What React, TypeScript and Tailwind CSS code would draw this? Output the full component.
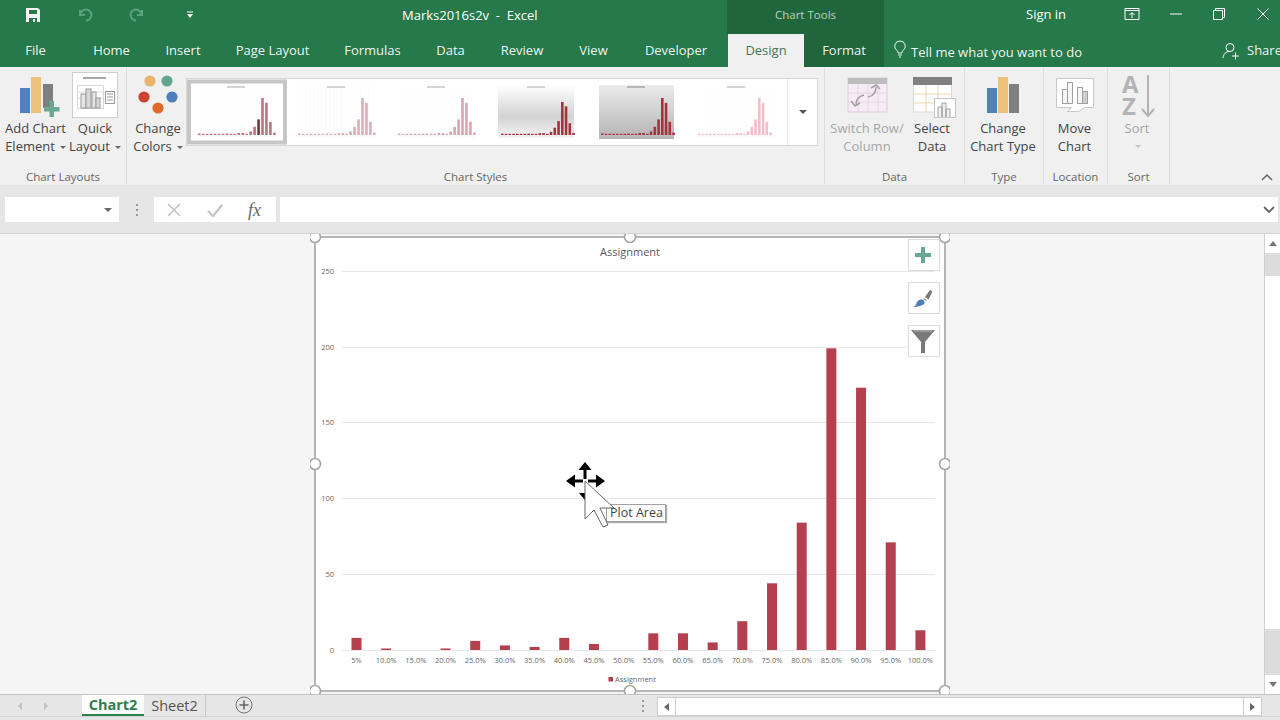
import React from "react";

const VALUES = [8, 1, 0, 1, 6, 3, 2, 8, 4, 0, 11, 11, 5, 19, 44, 84, 199, 173, 71, 13];
const LABELS = ["5%", "10.0%", "15.0%", "20.0%", "25.0%", "30.0%", "35.0%", "40.0%", "45.0%", "50.0%", "55.0%", "60.0%", "65.0%", "70.0%", "75.0%", "80.0%", "85.0%", "90.0%", "95.0%", "100.0%"];

function Caret({ className = "" }: { className?: string }) {
  return <span className={`inline-block w-0 h-0 border-l-[3px] border-r-[3px] border-t-[3px] border-l-transparent border-r-transparent border-t-[#666] align-middle ${className}`} />;
}

function Tab({ label, w, tone = "" }: { label: string; w: string; tone?: string }) {
  return <div className={`${w} shrink-0 h-full flex items-center justify-center text-white/95 ${tone}`}>{label}</div>;
}

function Thumb({ v, selected }: { v: number; selected?: boolean }) {
  const colors = ["#bd7380", "#d9b0b6", "#d8a6af", "#a8303f", "#a8303f", "#f0bfc8"];
  const id = `g${v}`;
  const x0 = v === 3 ? 14 : v === 4 ? 14 : 11;
  const step = v >= 3 ? 3.75 : 3.95;
  const base = 56;
  return (
    <svg viewBox="0 0 100 66" className="w-[100px] h-[66px] block shrink-0">
      <defs>
        <linearGradient id={id} x1="0" y1="0" x2="0" y2="1">
          {v === 3 ? (
            <>
              <stop offset="0" stopColor="#ffffff" />
              <stop offset="0.6" stopColor="#d2d2d2" />
              <stop offset="1" stopColor="#f6f6f6" />
            </>
          ) : (
            <>
              <stop offset="0" stopColor="#ebebeb" />
              <stop offset="1" stopColor="#b4b4b4" />
            </>
          )}
        </linearGradient>
      </defs>
      <rect width="100" height="66" fill="#fff" />
      {v === 3 && <rect x="11" y="6" width="76" height="53" fill={`url(#${id})`} />}
      {v === 4 && <rect x="12" y="6" width="75" height="54" fill={`url(#${id})`} />}
      {(v === 0 || v === 2 || v === 5) &&
        [11, 20, 29, 38, 47].map((y) => <line key={y} x1="12" x2="88" y1={y} y2={y} stroke="#f4f4f4" strokeWidth="0.5" />)}
      {v === 1 &&
        VALUES.map((_, i) => <line key={i} x1={11 + i * 3.95} x2={11 + i * 3.95} y1="7" y2="56" stroke="#f3f3f3" strokeWidth="0.5" />)}
      <rect x="40" y="7.5" width="18" height="1" fill={v === 4 ? "#888" : "#aaa"} />
      {VALUES.map((val, i) => {
        const h = Math.max((val / 199) * (v === 3 ? 33 : 37), 1.2);
        return (
          <rect key={i} x={x0 + i * step} y={base - h} width="2.6" height={h} fill={v === 0 && i === 15 ? "#7a3040" : colors[v]} />
        );
      })}
      <line x1="12" x2="88" y1={base + 1} y2={base + 1} stroke="#d8d8d8" strokeWidth="0.6" strokeDasharray="1.5 1" />
      {selected && <rect x="2" y="2.5" width="96" height="61" fill="none" stroke="#c6c6c6" strokeWidth="4" />}
    </svg>
  );
}

function RibbonButton({ w, icon, l1, l2, disabled, caret, className = "" }: { w: string; icon: React.ReactNode; l1: string; l2?: string; disabled?: boolean; caret?: boolean; className?: string }) {
  return (
    <div className={`${w} shrink-0 flex flex-col items-center ${disabled ? "text-[#a6a6a6]" : "text-[#444]"} ${className}`}>
      <div className="h-[47px] w-full flex justify-center items-start">{icon}</div>
      <div className="leading-[18px] whitespace-nowrap">{l1}</div>
      <div className="leading-[18px] h-[18px] whitespace-nowrap">
        {l2}
        {caret && <Caret className="ml-[5px]" />}
      </div>
    </div>
  );
}

function Group({ w, label, children, last }: { w: string; label: string; children: React.ReactNode; last?: boolean }) {
  return (
    <div className={`${w} shrink-0 flex flex-col h-[116px] mt-[1px] ${last ? "" : "border-r border-[#dcdcdc]"}`}>
      <div className="h-[101px] flex pt-[4px]">{children}</div>
      <div className="text-center text-[11.5px] leading-[15px] text-[#666] whitespace-nowrap">{label}</div>
    </div>
  );
}

const AddChartIcon = (
  <svg viewBox="5 71 60 50" className="w-[60px] h-[50px] shrink-0 -mt-[1px]">
    <rect x="19" y="88" width="10" height="25" fill="#4f81bd" />
    <rect x="30" y="77" width="10" height="36" fill="#ecc27a" />
    <rect x="42" y="84" width="10" height="24" fill="#7f7f7f" />
    <rect x="48.5" y="101" width="4.5" height="16" fill="#6aa88f" />
    <rect x="43" y="107" width="15.5" height="4.5" fill="#6aa88f" />
  </svg>
);
const QuickIcon = (
  <svg viewBox="71 71 48 48" className="w-[48px] h-[48px] shrink-0 -mt-[1px]">
    <rect x="72.5" y="72.5" width="45" height="45" fill="#fff" stroke="#cfcfcf" />
    <rect x="83" y="77" width="23" height="2" fill="#a6a6a6" />
    <rect x="77.5" y="85.5" width="26" height="23" fill="#fff" stroke="#d8d8d8" />
    <line x1="77" x2="104" y1="92" y2="92" stroke="#e0e0e0" />
    <line x1="77" x2="104" y1="98" y2="98" stroke="#e0e0e0" />
    <rect x="81" y="94" width="5" height="14" fill="#e6e6e6" stroke="#999" />
    <rect x="86" y="89" width="5" height="19" fill="#d8d8d8" stroke="#999" />
    <rect x="92" y="92" width="4" height="16" fill="#e6e6e6" stroke="#999" />
    <rect x="96" y="98" width="4" height="10" fill="#d8d8d8" stroke="#999" />
    <rect x="105.5" y="91.5" width="9" height="12" fill="#fff" stroke="#999" />
    <path d="M107 94h6M107 97h6M107 100h6" stroke="#999" />
  </svg>
);
const ColorsIcon = (
  <svg viewBox="135 72 46 46" className="w-[46px] h-[46px] shrink-0">
    <circle cx="150" cy="81" r="5.6" fill="#e8b56a" />
    <circle cx="167" cy="81" r="5.6" fill="#64a58f" />
    <circle cx="144" cy="97" r="5.6" fill="#cf4430" />
    <circle cx="172" cy="97" r="5.6" fill="#4c7fbc" />
    <circle cx="158" cy="108" r="5.6" fill="#e0692a" />
  </svg>
);
const SwitchIcon = (
  <svg viewBox="845 76 44 40" className="w-[44px] h-[40px] shrink-0 mt-[4px]">
    <rect x="848" y="78" width="39" height="34" fill="#f6ecf6" stroke="#dcc9dc" />
    <rect x="848" y="78" width="39" height="6" fill="#bdbdbd" />
    <path d="M848 93h39M848 102h39M858 84v28M868 84v28M878 84v28" stroke="#e2d2e2" strokeWidth="0.8" />
    <path d="M856 105c0-7 4-9 8-10M851 101l4 5 5-3M876 87c0 6-3 9-8 10M871 88l5-3 4 4" fill="none" stroke="#a0a0a0" strokeWidth="1.5" />
  </svg>
);
const SelectIcon = (
  <svg viewBox="912 76 46 44" className="w-[46px] h-[44px] shrink-0 mt-[4px] ml-[6px]">
    <rect x="913.5" y="78" width="38" height="34" fill="#fff" stroke="#d8d8d8" />
    <rect x="913" y="77" width="39" height="8" fill="#808080" />
    <path d="M914 94h38M914 103h38M926 85v27M938 85v27" stroke="#ecd5ae" strokeWidth="1" />
    <rect x="934.5" y="98.5" width="21" height="19" fill="#fff" stroke="#c4c4c4" />
    <path d="M938 117v-10h4v10M942 117v-14h4v14M946 117v-8h4v8" fill="#f0f0f0" stroke="#999" strokeWidth="0.9" />
  </svg>
);
const TypeIcon = (
  <svg viewBox="985 75 36 40" className="w-[36px] h-[40px] shrink-0 mt-[3px]">
    <rect x="987" y="88" width="10" height="25" fill="#4f81bd" />
    <rect x="998" y="77" width="10" height="36" fill="#ecc27a" />
    <rect x="1009" y="84" width="10" height="29" fill="#7f7f7f" />
  </svg>
);
const MoveIcon = (
  <svg viewBox="1054 76 42 42" className="w-[42px] h-[42px] shrink-0 mt-[4px]">
    <path d="M1056.5 78.5h37v29h-9l-6 4h-11l4-4h-15z" fill="#fff" stroke="#c8c8c8" />
    <rect x="1062.5" y="89.5" width="5" height="14" fill="#f6f6f6" stroke="#a0a0a0" />
    <rect x="1067.5" y="82.5" width="5" height="21" fill="#f6f6f6" stroke="#a0a0a0" />
    <rect x="1077.5" y="87.5" width="5" height="16" fill="#f6f6f6" stroke="#a0a0a0" />
    <rect x="1082.5" y="91.5" width="5" height="12" fill="#cfcfcf" stroke="#a0a0a0" />
  </svg>
);
const SortIcon = (
  <svg viewBox="0 0 36 44" className="w-[36px] h-[44px] shrink-0 mt-[3px] ml-[6px]">
    <text x="0" y="18" fontSize="24" fontWeight="700" fill="#b3b3b3" fontFamily="'Open Sans',sans-serif">A</text>
    <text x="0" y="40" fontSize="24" fontWeight="700" fill="#b3b3b3" fontFamily="'Open Sans',sans-serif">Z</text>
    <path d="M26 0v40M20 34l6 7 6-7" fill="none" stroke="#b3b3b3" strokeWidth="2" />
  </svg>
);

function Handle() {
  return <circle r="5.5" fill="#fff" stroke="#a6a6a6" strokeWidth="1.6" />;
}

function SideBtn({ children }: { children: React.ReactNode }) {
  return <div className="w-[32px] h-[32px] bg-white border border-[#dcdcdc] flex items-center justify-center pr-[2px]">{children}</div>;
}

export default function App() {
  const handles = [[315, 237], [630, 237], [945, 237], [315, 464], [945, 464], [315, 691], [630, 691], [945, 691]];
  return (
    <div className="w-[1280px] h-[720px] overflow-hidden flex flex-col bg-[#e6e6e6] text-[13px] font-['Open_Sans','Noto_Sans',sans-serif]">
      {/* Title bar */}
      <div className="h-[34px] flex bg-[#25794b] text-white shrink-0">
        <div className="w-[727px] flex items-center relative pb-[2px]">
          <svg viewBox="0 0 16 16" className="w-[16px] h-[16px] ml-[25px] mb-[3px]">
            <path d="M1 1h12l2 2v12H1z" fill="#f4f4f4" />
            <rect x="4" y="3" width="8" height="4" fill="#25794b" />
            <rect x="4" y="11" width="8" height="4" fill="#25794b" />
            <rect x="8" y="12" width="2" height="3" fill="#f4f4f4" />
          </svg>
          <svg viewBox="0 0 16 16" className="w-[16px] h-[16px] ml-[36px] mb-[2px]">
            <path d="M3 3v5h5M3.500 8A5.500 5.500 0 1 1 9 13.500" fill="none" stroke="#5da27e" strokeWidth="2" />
          </svg>
          <svg viewBox="0 0 16 16" className="w-[16px] h-[16px] ml-[36px] mb-[2px]">
            <path d="M13 3v5H8M12.500 8A5.500 5.500 0 1 0 7 13.500" fill="none" stroke="#5da27e" strokeWidth="2" />
          </svg>
          <svg viewBox="0 0 8 8" className="w-[8px] h-[8px] ml-[41px] mb-[2px]">
            <path d="M1 1h6" stroke="#fff" />
            <path d="M1 3h6L4 7z" fill="#fff" />
          </svg>
          <div className="ml-[208px] whitespace-pre">Marks2016s2v  -  Excel</div>
        </div>
        <div className="w-[157px] bg-[#1f663c] flex items-center justify-center text-[11.5px] text-white/70 pb-[4px]">Chart Tools</div>
        <div className="flex-1 flex items-center">
          <div className="ml-[142px] w-[43px] whitespace-nowrap pb-[5px]">Sign in</div>
          <svg viewBox="0 0 16 14" className="w-[16px] h-[14px] ml-[55px] mb-[6px]">
            <path d="M1 1.500h14v11H1zM1 3.500h14M8 11V6M5.500 8L8 5.500 10.500 8" fill="none" stroke="#fff" />
          </svg>
          <svg viewBox="0 0 14 14" className="w-[14px] h-[14px] ml-[29px] mb-[6px]">
            <path d="M1 7h12" stroke="#fff" />
          </svg>
          <svg viewBox="0 0 14 14" className="w-[14px] h-[14px] ml-[29px] mb-[6px]">
            <path d="M1.500 3.500h9v9h-9zM3.500 3.500v-2h9v9h-2" fill="none" stroke="#fff" />
          </svg>
          <svg viewBox="0 0 14 14" className="w-[14px] h-[14px] ml-[30px] mb-[6px]">
            <path d="M1.500 1.500l11 11M12.500 1.500l-11 11" stroke="#fff" />
          </svg>
        </div>
      </div>
      {/* Tab row */}
      <div className="h-[33px] flex bg-[#25794b] shrink-0">
        <Tab label="File" w="w-[71px]" />
        <Tab label="Home" w="w-[81px]" />
        <Tab label="Insert" w="w-[62px]" />
        <Tab label="Page Layout" w="w-[117px]" />
        <Tab label="Formulas" w="w-[83px]" />
        <Tab label="Data" w="w-[73px]" />
        <Tab label="Review" w="w-[70px]" />
        <Tab label="View" w="w-[73px]" />
        <Tab label="Developer" w="w-[92px]" />
        <div className="w-[6px] shrink-0" />
        <div className="w-[76px] shrink-0 h-full bg-[#f0f0f0] text-[#3f7a58] flex items-center justify-center">Design</div>
        <Tab label="Format" w="w-[80px]" tone="bg-[#1f663c]" />
        <div className="flex items-center text-white/95 ml-[9px] shrink-0">
          <svg viewBox="0 0 14 18" className="w-[14px] h-[18px] mb-[3px] shrink-0">
            <path d="M7 1a5.200 5.200 0 0 0-3 9.500c.7.700 1 1.500 1 2.500h4c0-1 .3-1.800 1-2.500A5.200 5.200 0 0 0 7 1zM5 15h4M6 17h2" fill="none" stroke="#fff" strokeWidth="0.9" />
          </svg>
          <span className="ml-[4px] whitespace-nowrap w-[311px] mt-[4px]">Tell me what you want to do</span>
          <svg viewBox="0 0 18 18" className="w-[18px] h-[18px] shrink-0">
            <circle cx="8" cy="5.500" r="4" fill="none" stroke="#fff" />
            <path d="M1 16c.5-4 3-6.500 6-6.500M10 14h7M13.500 10.500v7" fill="none" stroke="#fff" />
          </svg>
          <span className="ml-[7px] whitespace-nowrap">Share</span>
        </div>
      </div>
      {/* Ribbon */}
      <div className="h-[118px] flex bg-[#f0f0f0] shrink-0 relative">
        <Group w="w-[127px]" label="Chart Layouts">
          <RibbonButton w="w-[71px]" icon={AddChartIcon} l1="Add Chart" l2="Element" caret />
          <RibbonButton w="w-[48px]" icon={QuickIcon} l1="Quick" l2="Layout" caret />
        </Group>
        <Group w="w-[698px]" label="Chart Styles">
          <RibbonButton w="w-[59px]" icon={ColorsIcon} l1="Change" l2="Colors" caret className="pl-[3px]" />
          <div className="w-[632px] h-[68px] mt-[6px] shrink-0 bg-white border border-[#d6d6d6] flex">
            <Thumb v={0} selected />
            <Thumb v={1} />
            <Thumb v={2} />
            <Thumb v={3} />
            <Thumb v={4} />
            <Thumb v={5} />
            <div className="flex-1 border-l border-[#e6e6e6] flex items-center justify-center">
              <span className="w-0 h-0 border-l-[4px] border-r-[4px] border-t-[4px] border-l-transparent border-r-transparent border-t-[#555]" />
            </div>
          </div>
        </Group>
        <Group w="w-[140px]" label="Data">
          <RibbonButton w="w-[84px]" icon={SwitchIcon} l1="Switch Row/" l2="Column" disabled />
          <RibbonButton w="w-[46px]" icon={SelectIcon} l1="Select" l2="Data" />
        </Group>
        <Group w="w-[79px]" label="Type">
          <RibbonButton w="w-[76px]" icon={TypeIcon} l1="Change" l2="Chart Type" />
        </Group>
        <Group w="w-[64px]" label="Location">
          <RibbonButton w="w-[61px]" icon={MoveIcon} l1="Move" l2="Chart" />
        </Group>
        <Group w="w-[62px]" label="Sort">
          <RibbonButton w="w-[58px]" icon={SortIcon} l1="Sort" disabled />
        </Group>
        <svg viewBox="0 0 12 8" className="absolute right-[7px] bottom-[4px] w-[12px] h-[8px]">
          <path d="M1 7l5-5 5 5" fill="none" stroke="#666" strokeWidth="1.500" />
        </svg>
        <span className="absolute left-[1135px] top-[78px] w-0 h-0 border-l-[3px] border-r-[3px] border-t-[3px] border-l-transparent border-r-transparent border-t-[#c4c4c4]" />
      </div>
      {/* Formula bar */}
      <div className="h-[49px] shrink-0 bg-[#e6e6e6] border-b border-[#d4d4d4] flex pt-[12px] pb-[11px]">
        <div className="w-[114px] ml-[5px] h-[25px] bg-white flex items-center justify-end pr-[7px]">
          <span className="w-0 h-0 border-l-[4px] border-r-[4px] border-t-[4px] border-l-transparent border-r-transparent border-t-[#666]" />
        </div>
        <div className="w-[35px] h-[25px] flex flex-col items-center justify-center gap-[3px]">
          <span className="w-[2px] h-[2px] bg-[#999]" />
          <span className="w-[2px] h-[2px] bg-[#999]" />
          <span className="w-[2px] h-[2px] bg-[#999]" />
        </div>
        <div className="w-[122px] h-[25px] bg-white flex items-center">
          <svg viewBox="0 0 14 14" className="w-[14px] h-[14px] ml-[13px]">
            <path d="M1 1l12 12M13 1L1 13" stroke="#bdbdbd" strokeWidth="1.400" />
          </svg>
          <svg viewBox="0 0 16 14" className="w-[16px] h-[14px] ml-[26px]">
            <path d="M1 8l5 5L15 2" fill="none" stroke="#c4c4c4" strokeWidth="2.200" />
          </svg>
          <span className="ml-[25px] font-['Liberation_Serif',serif] italic text-[18px] leading-none text-[#666]">fx</span>
        </div>
        <div className="w-[998px] h-[25px] ml-[4px] bg-white flex items-center justify-end pr-[3px]">
          <svg viewBox="0 0 12 8" className="w-[12px] h-[8px]">
            <path d="M1 1l5 5 5-5" fill="none" stroke="#666" strokeWidth="1.800" />
          </svg>
        </div>
      </div>
      {/* Sheet area */}
      <div className="h-[460px] shrink-0 flex bg-[#f5f5f5] relative overflow-hidden">
        <div className="flex-1 relative">
          <svg viewBox="310 234 640 460" className="ml-[310px] w-[640px] h-[460px] block">
            <rect x="315" y="237" width="630" height="454" fill="#fff" stroke="#a6a6a6" strokeWidth="1.600" />
            <text x="630" y="256" textAnchor="middle" fontSize="11" fill="#595959" fontFamily="'Open Sans',sans-serif">Assignment</text>
            {[[250, 271], [200, 347], [150, 422], [100, 498], [50, 574], [0, 650]].map(([n, y]) => (
              <g key={n}>
                <line x1="342" x2="935" y1={y + 0.5} y2={y + 0.5} stroke="#e8e8e8" />
                <text x="334" y={y + 3} textAnchor="end" fontSize="7.500" fill="#666" fontFamily="'Open Sans',sans-serif">{n}</text>
              </g>
            ))}
            {VALUES.map((val, i) => {
              const h = val * 1.516;
              const cx = 356.5 + i * 29.68;
              return (
                <g key={i}>
                  <rect x={cx - 5} y={650 - h} width="10" height={h} fill="#b43f4e" />
                  <text x={cx} y="663" textAnchor="middle" fontSize="7.500" fill="#666" fontFamily="'Open Sans',sans-serif">{LABELS[i]}</text>
                </g>
              );
            })}
            <rect x="608.500" y="677" width="4.500" height="4.500" fill="#b43f4e" />
            <text x="615" y="682" fontSize="7.500" fill="#666" fontFamily="'Open Sans',sans-serif">Assignment</text>
            {handles.map(([x, y], i) => (
              <g key={i} transform={`translate(${x} ${y})`}>
                <Handle />
              </g>
            ))}
          </svg>
          {/* Chart side buttons */}
          <div className="absolute left-[908px] top-[5px] flex flex-col gap-[11px]">
            <SideBtn>
              <svg viewBox="0 0 16 16" className="w-[16px] h-[16px]">
                <path d="M6 0h4v6h6v4h-6v6H6v-6H0V6h6z" fill="#6aa88f" />
              </svg>
            </SideBtn>
            <SideBtn>
              <svg viewBox="0 0 20 20" className="w-[20px] h-[20px]">
                <path d="M12 9l5-7 2.500 1.500-4 8z" fill="#777" />
                <path d="M11 10l3 2-1 1-3-2z" fill="#999" />
                <path d="M0 19c3-1 3-3 4-5 1-2 4-3 6-2 2 1 2 3 1 4-2 2-7 3-11 3z" fill="#4f7fb8" />
              </svg>
            </SideBtn>
            <SideBtn>
              <svg viewBox="0 0 26 26" className="w-[26px] h-[26px]">
                <path d="M1 2h24L15 14v11h-4V14z" fill="#7a7a7a" />
                <path d="M4 3h18" stroke="#bbb" />
              </svg>
            </SideBtn>
          </div>
          {/* Tooltip */}
          <div className="absolute left-[606px] top-[270px] h-[18px] w-[60px] bg-white border border-[#a0a0a0] shadow-[1px_1px_1px_#aaa] text-[12.5px] leading-[16px] text-[#444] pl-[3px] whitespace-nowrap">Plot Area</div>
          {/* Move cursor */}
          <svg viewBox="0 0 60 80" className="absolute left-[555px] top-[224px] w-[60px] h-[80px]">
            <path d="M30 4l6.500 8h-5v9h-3v-9h-5z" fill="#000" />
            <path d="M11 23l9-6.500v5h8v3h-8v5z" fill="#000" />
            <path d="M50 23l-9-6.500v5h-8v3h8v5z" fill="#000" />
            <path d="M24 35h12l-6 7z" fill="#000" />
            <path d="M30 23v38l9-9 9 17 5-2-8-17h14z" fill="#fff" stroke="#666" strokeWidth="1" strokeLinejoin="round" />
          </svg>
        </div>
        <div className="w-[16px] shrink-0 border-l border-[#cfcfcf] flex flex-col bg-[#dcdcdc]">
          <div className="h-[19px] bg-white flex items-center justify-center shrink-0">
            <span className="w-0 h-0 border-l-[4px] border-r-[4px] border-b-[5px] border-l-transparent border-r-transparent border-b-[#777]" />
          </div>
          <div className="h-[23px] shrink-0" />
          <div className="h-[353px] bg-white shrink-0" />
          <div className="flex-1" />
          <div className="h-[19px] bg-white flex items-center justify-center shrink-0">
            <span className="w-0 h-0 border-l-[4px] border-r-[4px] border-t-[5px] border-l-transparent border-r-transparent border-t-[#777]" />
          </div>
        </div>
      </div>
      {/* Sheet tab bar */}
      <div className="h-[23px] shrink-0 flex bg-[#e6e6e6] border-t border-b border-t-[#c4c4c4] border-b-[#d2d2d2] items-stretch text-[#555]">
        <div className="w-[82px] flex items-center">
          <span className="ml-[18px] w-0 h-0 border-t-[4px] border-b-[4px] border-r-[4px] border-t-transparent border-b-transparent border-r-[#c0c0c0]" />
          <span className="ml-[22px] w-0 h-0 border-t-[4px] border-b-[4px] border-l-[4px] border-t-transparent border-b-transparent border-l-[#c0c0c0]" />
        </div>
        <div className="w-[62px] h-[21px] bg-white border-b-2 border-[#2f7d52] text-[#2f7d52] font-bold text-[14.5px] flex items-center justify-center">Chart2</div>
        <div className="w-[62px] h-[21px] text-[14.5px] flex items-center justify-center border-r border-[#c8c8c8]">Sheet2</div>
        <div className="w-[74px] flex items-center justify-center pl-[2px] pb-[1px]">
          <svg viewBox="0 0 18 18" className="w-[18px] h-[18px]">
            <circle cx="9" cy="9" r="8" fill="none" stroke="#777" strokeWidth="1" />
            <path d="M9 4.500v9M4.500 9h9" stroke="#666" strokeWidth="1.600" />
          </svg>
        </div>
        <div className="w-[377px] flex flex-col items-end justify-center gap-[3px] pr-[13px]">
          <span className="w-[2px] h-[2px] bg-[#999]" />
          <span className="w-[2px] h-[2px] bg-[#999]" />
          <span className="w-[2px] h-[2px] bg-[#999]" />
        </div>
        <div className="w-[605px] h-[19px] mt-[2px] bg-white border border-[#cfcfcf] flex justify-between items-stretch">
          <div className="w-[18px] border-r border-[#cfcfcf] flex items-center justify-center">
            <span className="w-0 h-0 border-t-[4px] border-b-[4px] border-r-[5px] border-t-transparent border-b-transparent border-r-[#666]" />
          </div>
          <div className="w-[18px] border-l border-[#cfcfcf] flex items-center justify-center">
            <span className="w-0 h-0 border-t-[4px] border-b-[4px] border-l-[5px] border-t-transparent border-b-transparent border-l-[#666]" />
          </div>
        </div>
      </div>
    </div>
  );
}
